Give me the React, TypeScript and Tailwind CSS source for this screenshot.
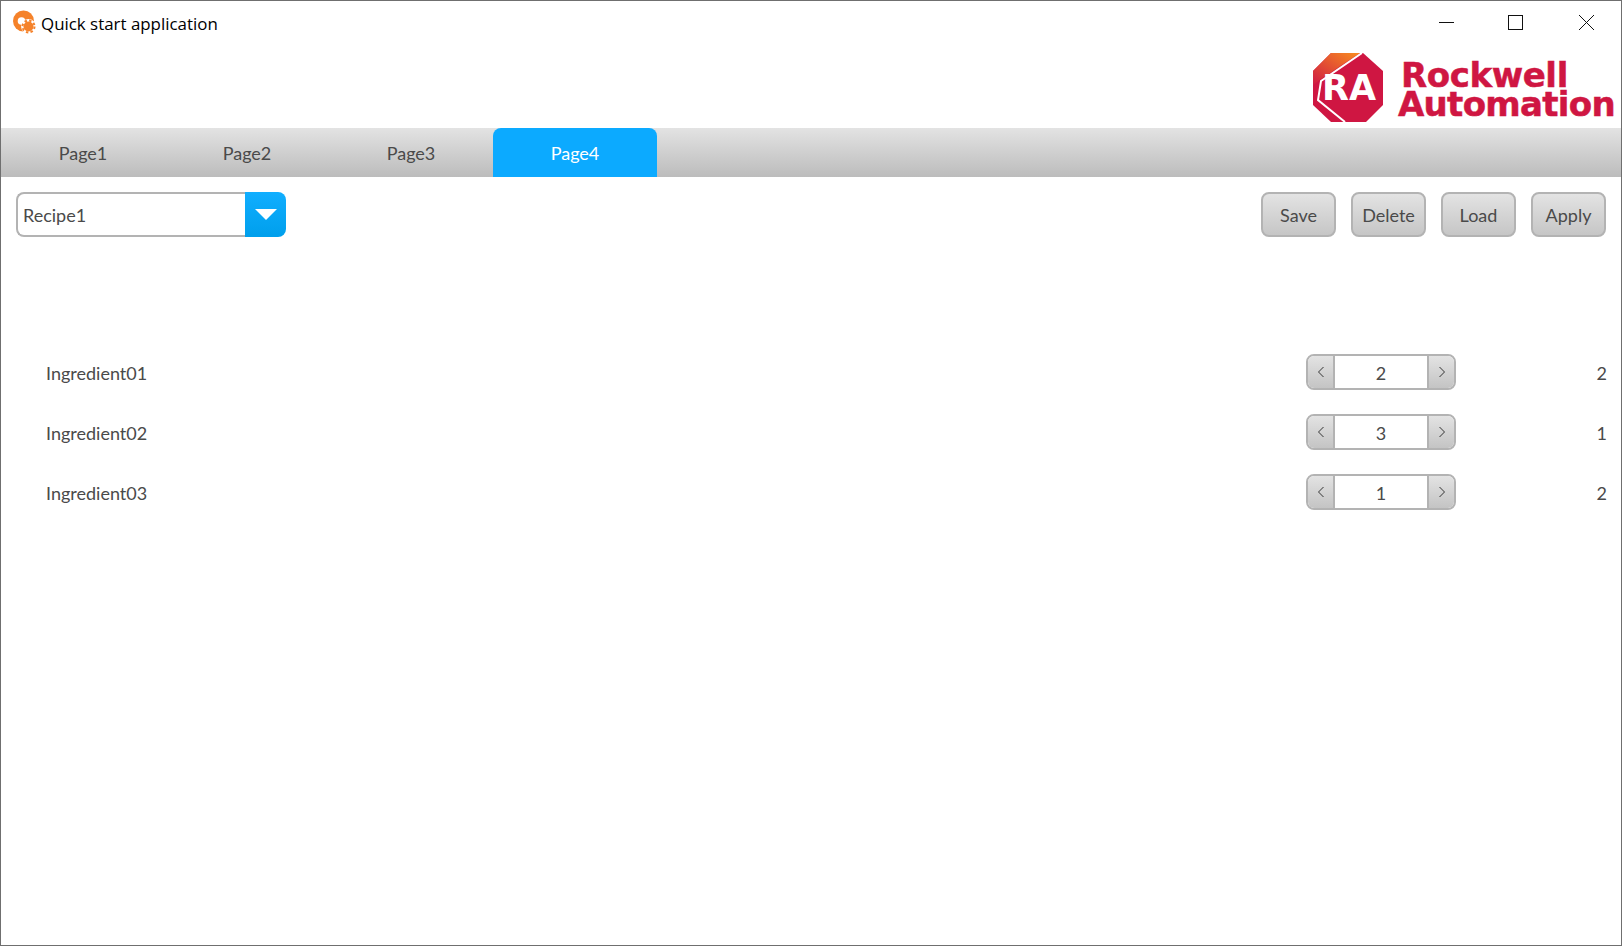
const tabs = ["Page1", "Page2", "Page3", "Page4"];

const rows = [
  { name: "Ingredient01", value: 2, actual: 2 },
  { name: "Ingredient02", value: 3, actual: 1 },
  { name: "Ingredient03", value: 1, actual: 2 },
];

function AppIcon() {
  return (
    <svg width="24" height="24" viewBox="0 0 24 24" className="shrink-0">
      <circle cx="10.5" cy="11" r="10.5" fill="#f5822a" />
      <circle cx="8.5" cy="11" r="3.8" fill="#fff" />
      <circle cx="15.5" cy="16.5" r="7.4" fill="#fff" />
      <circle cx="15.5" cy="16.5" r="5" fill="#f5822a" />
      <circle cx="15.5" cy="16.5" r="6" fill="none" stroke="#f5822a" strokeWidth="2" strokeDasharray="2.4 2.3" />
    </svg>
  );
}

function WindowControls() {
  return (
    <div className="flex h-[44px] items-center justify-end">
      <svg width="180" height="44" viewBox="0 0 180 44" fill="none" stroke="#111" strokeWidth="1">
        <path d="M1 21.5h15" />
        <rect x="70.5" y="14.5" width="14" height="14" />
        <path d="M141 14l15 15M156 14l-15 15" />
      </svg>
    </div>
  );
}

function Logo() {
  return (
    <div className="flex items-start justify-end">
      <svg width="71" height="70" viewBox="0 0 71 70" className="mr-[14px] shrink-0">
        <defs>
          <linearGradient id="ra-top" x1="1" y1="0" x2="0" y2="1">
            <stop offset="0" stopColor="#f98d1f" />
            <stop offset="1" stopColor="#cf1a43" />
          </linearGradient>
        </defs>
        <path d="M18 0H50L70 18V52L53 69H18L0 52V18Z" fill="#cf1642" />
        <path d="M18 0H47L8 26 0 32V18Z" fill="url(#ra-top)" />
        <path d="M49 0L8 28 5 47 32 69" fill="none" stroke="#fff" strokeWidth="2" />
        <text
          x="9"
          y="47"
          fill="#fff"
          className="[font-family:'DejaVu_Sans',sans-serif]"
          fontSize="35"
          fontWeight="700"
        >
          RA
        </text>
      </svg>
      <div className="mr-[6px] w-[217px] pt-[8px] text-[#cf1642] [-webkit-text-stroke:0.5px_#cf1642] [font-family:'DejaVu_Sans',sans-serif]">
        <div className="ml-[3px] h-[29px] text-[34px] font-bold leading-[28px] tracking-[-0.4px]">Rockwell</div>
        <div className="h-[28px] whitespace-nowrap text-[34px] font-bold leading-[28px] tracking-[-0.7px]">Automation</div>
      </div>
    </div>
  );
}

function GreyButton({ label }: { label: string }) {
  return (
    <button className="h-[45px] w-[75px] rounded-[8px] border-2 border-[#b3b3b3] bg-gradient-to-b from-[#e3e3e3] to-[#c6c6c6] pt-[1px] text-[18px] text-[#4a4a4a]">
      {label}
    </button>
  );
}

function Spinner({ value }: { value: number }) {
  return (
    <div className="flex h-[36px] w-[150px] overflow-hidden rounded-[8px] border-2 border-[#b3b3b3] text-[#4a4a4a]">
      <div className="flex w-[27px] items-center justify-center border-r-2 border-[#b3b3b3] bg-gradient-to-b from-[#e3e3e3] to-[#c4c4c4]">
        <svg width="8" height="12" viewBox="0 0 8 12" fill="none" stroke="#333" strokeWidth="1">
          <path d="M6.5 1L1.5 6l5 5" />
        </svg>
      </div>
      <div className="flex flex-1 items-center justify-center bg-white pt-[2px] text-[18px]">{value}</div>
      <div className="flex w-[27px] items-center justify-center border-l-2 border-[#b3b3b3] bg-gradient-to-b from-[#e3e3e3] to-[#c4c4c4]">
        <svg width="8" height="12" viewBox="0 0 8 12" fill="none" stroke="#333" strokeWidth="1">
          <path d="M1.5 1l5 5-5 5" />
        </svg>
      </div>
    </div>
  );
}

export default function App() {
  return (
    <div className="flex h-[946px] w-[1622px] flex-col overflow-hidden border border-[#6f6f6f] bg-white [font-family:Lato,sans-serif]">
      <div className="flex h-[127px] shrink-0 justify-between">
        <div className="flex h-[44px] items-start gap-[4px] pl-[12px] pt-[9px]">
          <AppIcon />
          <span className="text-[16.9px] leading-[28px] text-black [font-family:'Open_Sans',sans-serif]">
            Quick start application
          </span>
        </div>
        <div className="flex w-[320px] flex-col">
          <div className="mr-[3px]">
            <WindowControls />
          </div>
          <div className="mt-[8px]">
            <Logo />
          </div>
        </div>
      </div>

      <div className="flex h-[49px] shrink-0 bg-gradient-to-b from-[#e3e3e3] to-[#bcbcbc]">
        {tabs.map((tab) =>
          tab === "Page4" ? (
            <div
              key={tab}
              className="flex w-[164px] items-center justify-center rounded-t-[8px] bg-[#0caaff] pt-[2px] text-[18px] text-white"
            >
              {tab}
            </div>
          ) : (
            <div key={tab} className="flex w-[164px] items-center justify-center pt-[2px] text-[18px] text-[#4a4a4a]">
              {tab}
            </div>
          ),
        )}
      </div>

      <div className="flex items-start justify-between px-[15px] pt-[15px]">
        <div className="flex h-[45px] w-[270px]">
          <div className="flex flex-1 items-center rounded-l-[8px] border-2 border-r-0 border-[#b3b3b3] bg-white pl-[5px] pt-[2px] text-[18px] text-[#4a4a4a]">
            Recipe1
          </div>
          <div className="flex w-[41px] items-center justify-center rounded-r-[8px] bg-gradient-to-b from-[#10aeff] to-[#009fec]">
            <svg width="22" height="11" viewBox="0 0 22 11">
              <path d="M0 0h22L11 11z" fill="#fff" />
            </svg>
          </div>
        </div>
        <div className="flex gap-[15px]">
          {["Save", "Delete", "Load", "Apply"].map((b) => (
            <GreyButton key={b} label={b} />
          ))}
        </div>
      </div>

      <div className="flex flex-col gap-[24px] pl-[45px] pr-[14px] pt-[117px]">
        {rows.map((row) => (
          <div key={row.name} className="flex h-[36px] items-center text-[18px] text-[#4a4a4a]">
            <span className="flex-1 pt-[2px]">{row.name}</span>
            <Spinner value={row.value} />
            <span className="w-[151px] pt-[2px] text-right">{row.actual}</span>
          </div>
        ))}
      </div>
    </div>
  );
}
